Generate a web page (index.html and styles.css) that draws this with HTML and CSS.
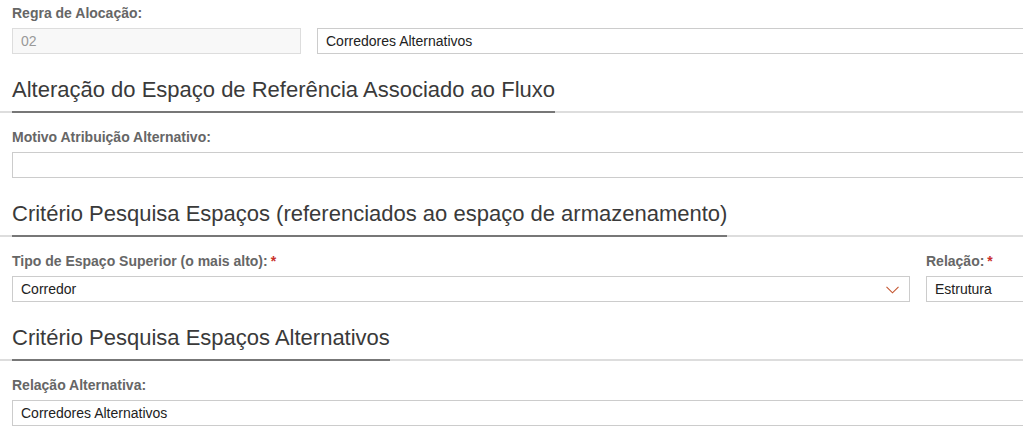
FILE: index.html
```
<!DOCTYPE html>
<html lang="pt">
<head>
<meta charset="utf-8">
<link rel="stylesheet" href="styles.css">
</head>
<body>
<div class="page">
  <div class="field">
    <label class="lbl">Regra de Alocação:</label>
    <div class="row">
      <div class="input code">02</div>
      <div class="input grow">Corredores Alternativos</div>
    </div>
  </div>

  <h2 class="section"><span class="title">Alteração do Espaço de Referência Associado ao Fluxo</span></h2>

  <div class="field">
    <label class="lbl">Motivo Atribuição Alternativo:</label>
    <div class="row">
      <div class="input grow"></div>
    </div>
  </div>

  <h2 class="section"><span class="title">Critério Pesquisa Espaços (referenciados ao espaço de armazenamento)</span></h2>

  <div class="row split">
    <div class="field main">
      <label class="lbl">Tipo de Espaço Superior (o mais alto):<span class="req">*</span></label>
      <div class="input select">Corredor
        <svg class="chev" width="13" height="8" viewBox="0 0 13 8"><path d="M0.5 0.8 L6.5 6.8 L12.5 0.8" fill="none" stroke="#c4552e" stroke-width="1.1"/></svg>
      </div>
    </div>
    <div class="field side">
      <label class="lbl">Relação:<span class="req">*</span></label>
      <div class="input">Estrutura</div>
    </div>
  </div>

  <h2 class="section"><span class="title">Critério Pesquisa Espaços Alternativos</span></h2>

  <div class="field">
    <label class="lbl">Relação Alternativa:</label>
    <div class="row">
      <div class="input grow">Corredores Alternativos</div>
    </div>
  </div>
</div>
</body>
</html>
```
FILE: styles.css
```
html, body {
  margin: 0;
  padding: 0;
  background: #fff;
  overflow: hidden;
}
body {
  width: 1023px;
  height: 445px;
  font-family: "Liberation Sans", Arial, sans-serif;
}
.page {
  width: 1060px;
  padding-left: 12px;
  padding-top: 5px;
  box-sizing: border-box;
}
.field {
  display: flex;
  flex-direction: column;
}
.lbl {
  display: block;
  font-size: 14px;
  line-height: 16px;
  font-weight: bold;
  color: #666;
  margin-bottom: 7px;
}
.req {
  color: #c9302c;
  margin-left: 3px;
}
.row {
  display: flex;
  gap: 16px;
}
.input {
  box-sizing: border-box;
  height: 26px;
  border: 1px solid #ccc;
  background: #fff;
  font-size: 14px;
  line-height: 24px;
  color: #222;
  padding: 0 8px;
  white-space: nowrap;
}
.grow {
  flex: 1;
}
.code {
  width: 289px;
  background: #f8f8f8;
  border-color: #ddd;
  color: #999;
}
.section {
  margin: 23px 0 16px -12px;
  padding: 0 0 0 12px;
  font-weight: normal;
  font-size: 22px;
  line-height: 26px;
  color: #3a3a3a;
  border-bottom: 2px solid #ddd;
}
.title {
  display: inline-block;
  padding-bottom: 8px;
  border-bottom: 2px solid #777;
  margin-bottom: -2px;
}
.split .main {
  width: 898px;
}
.split .side {
  flex: 1;
}
.select {
  display: flex;
  align-items: center;
  justify-content: space-between;
}
.chev {
  margin-right: 2px;
  margin-top: 1px;
}
```
